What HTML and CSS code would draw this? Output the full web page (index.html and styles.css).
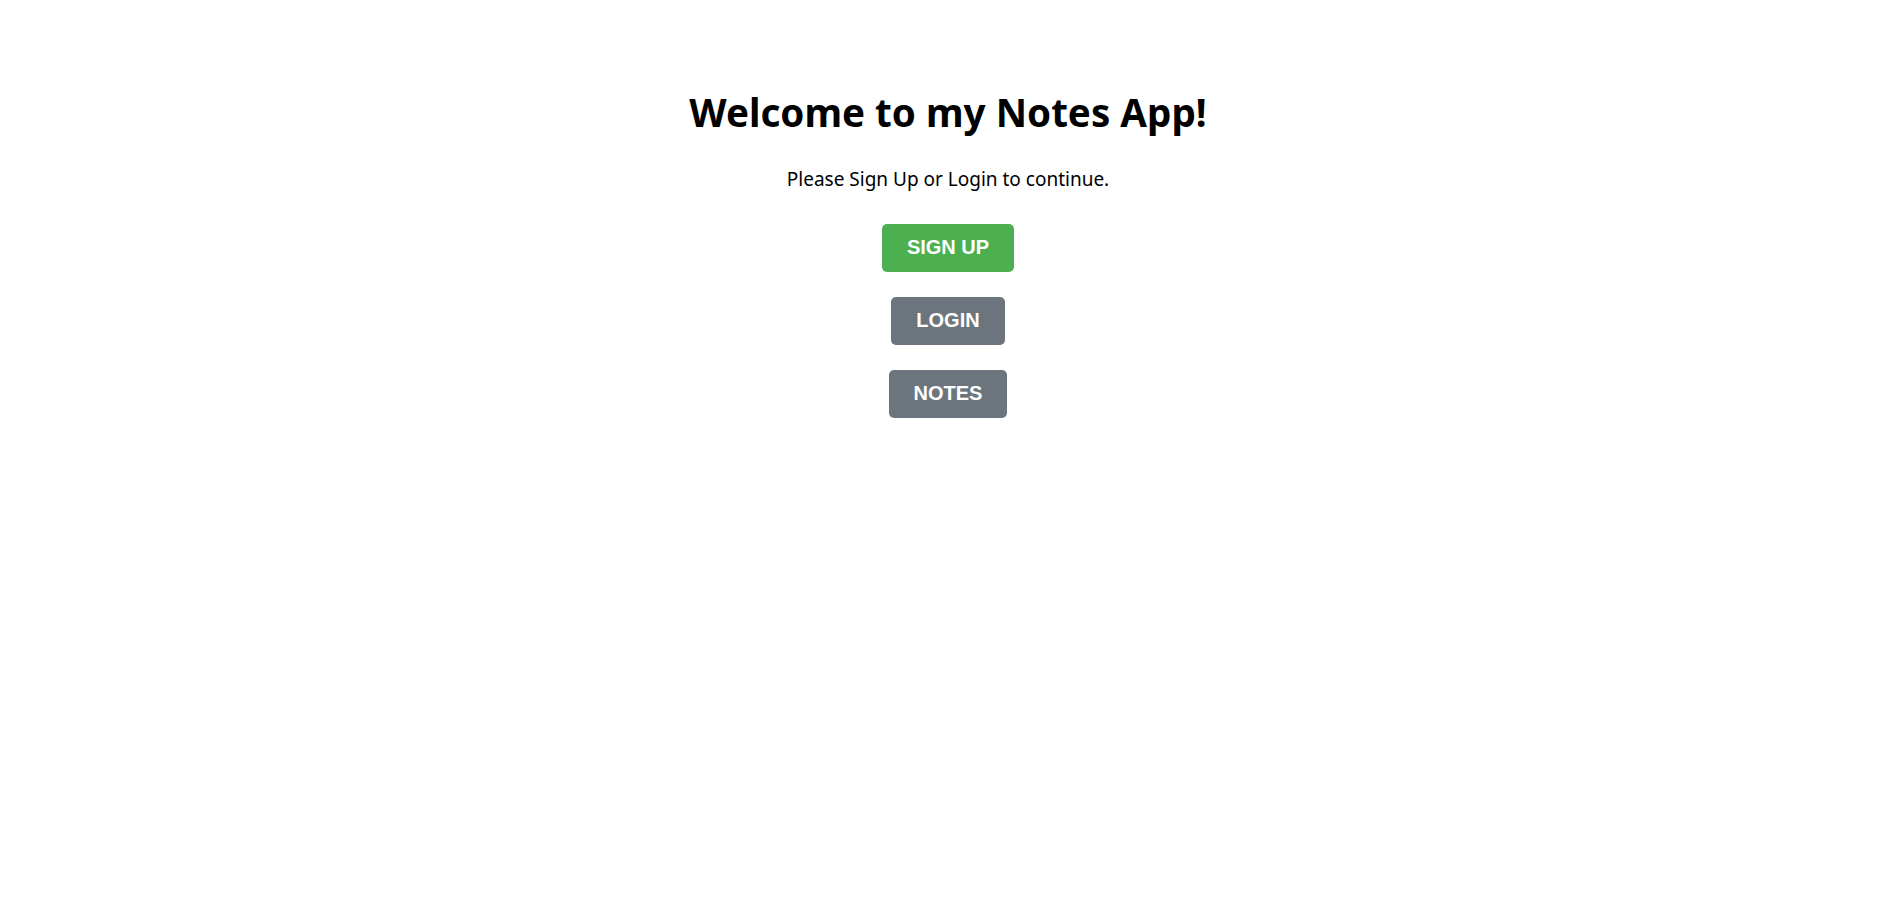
FILE: index.html
```html
<!DOCTYPE html>
<html lang="en">
<head>
<meta charset="utf-8">
<title>Notes App</title>
<link rel="stylesheet" href="styles.css">
</head>
<body>
<main class="home">
  <h1 class="home-title">Welcome to my Notes App!</h1>
  <p class="home-text">Please Sign Up or Login to continue.</p>
  <div class="home-actions">
    <button class="btn btn-primary" type="button">SIGN UP</button>
    <button class="btn btn-secondary" type="button">LOGIN</button>
    <button class="btn btn-secondary" type="button">NOTES</button>
  </div>
</main>
</body>
</html>
```

FILE: styles.css
```css
html, body {
  margin: 0;
  padding: 0;
  background: #ffffff;
}

body {
  font-family: "Noto Sans", "Open Sans", sans-serif;
  color: #000000;
}

.home {
  display: flex;
  flex-direction: column;
  align-items: center;
  text-align: center;
  padding: 88px 7px 0 0;
}

.home-title {
  margin: 0 0 31px;
  font-size: 38.6px;
  line-height: 48px;
  font-weight: 700;
}

.home-text {
  margin: 0 0 33px;
  font-size: 19px;
  line-height: 24px;
}

.home-actions {
  display: flex;
  flex-direction: column;
  align-items: center;
  gap: 25px;
}

.btn {
  font-family: "Liberation Sans", Arial, sans-serif;
  font-weight: 700;
  font-size: 20px;
  line-height: 24px;
  padding: 11px 25px 13px;
  border: none;
  border-radius: 5px;
  color: #ffffff;
  cursor: pointer;
}

.btn-primary {
  background: #4caf50;
}

.btn-secondary {
  background: #6c757d;
}
```
